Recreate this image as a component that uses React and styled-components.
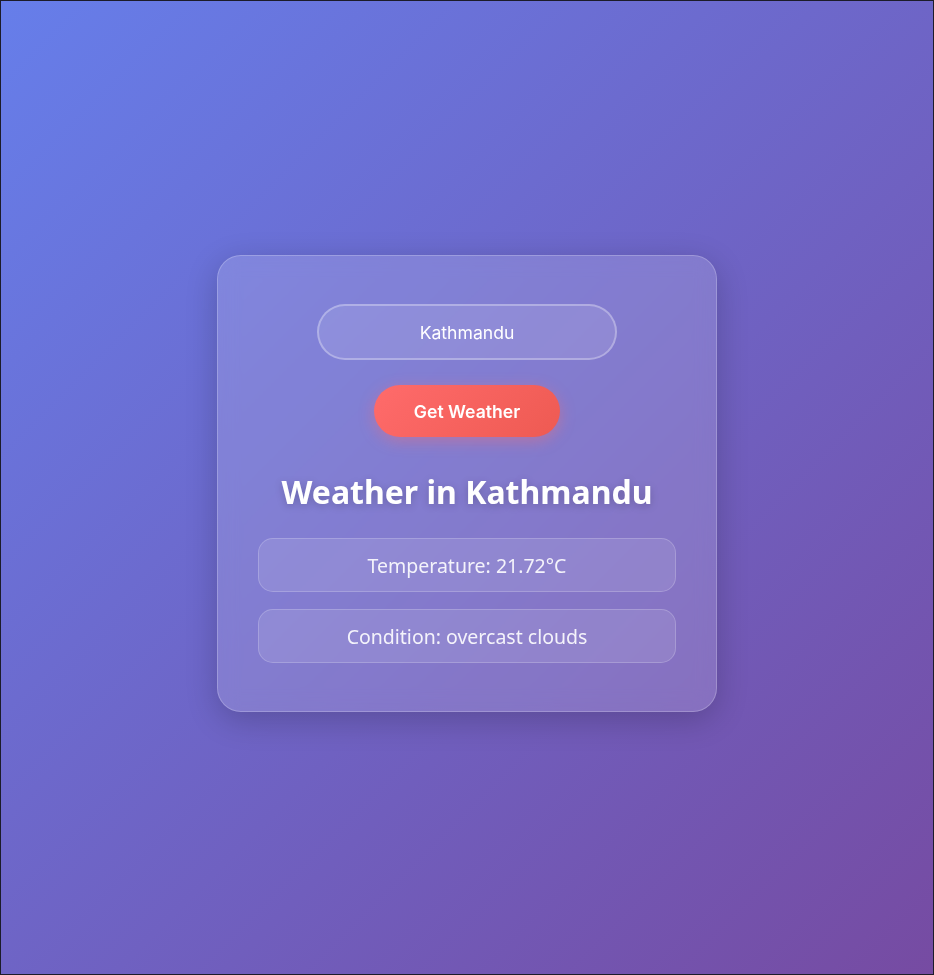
import React, { useState } from 'react';
import styled, { createGlobalStyle } from 'styled-components';

const GlobalStyle = createGlobalStyle`
  * {
    box-sizing: border-box;
  }
  html, body {
    margin: 0;
    padding: 0;
  }
  body {
    font-family: 'Noto Sans', 'Open Sans', sans-serif;
  }
`;

const Page = styled.div`
  min-height: 100vh;
  display: flex;
  justify-content: center;
  align-items: center;
  padding-bottom: 9px;
  border: 1px solid #1c1c2a;
  background: linear-gradient(135deg, #667eea 0%, #764ba2 100%);
`;

const Card = styled.div`
  width: 500px;
  padding: 48px 40px 48px;
  display: flex;
  flex-direction: column;
  align-items: center;
  background: rgba(255, 255, 255, 0.15);
  border: 1px solid rgba(255, 255, 255, 0.22);
  border-radius: 24px;
  box-shadow: 0 8px 32px rgba(0, 0, 0, 0.2);
  backdrop-filter: blur(10px);
`;

const CityInput = styled.input`
  width: 300px;
  height: 56px;
  padding: 2px 20px 0;
  border: 2px solid rgba(255, 255, 255, 0.3);
  border-radius: 30px;
  background: rgba(255, 255, 255, 0.1);
  color: #fff;
  font-family: Inter, sans-serif;
  font-size: 17.6px;
  text-align: center;
  outline: none;
`;

const FetchButton = styled.button`
  margin-top: 25px;
  width: 186px;
  height: 52px;
  padding: 2px 0 0;
  border: none;
  border-radius: 26px;
  background: linear-gradient(135deg, #ff6b6b, #ee5a52);
  color: #fff;
  font-family: Inter, sans-serif;
  font-size: 17.6px;
  font-weight: 600;
  box-shadow: 0 4px 15px rgba(255, 107, 107, 0.4);
  cursor: pointer;
`;

const Title = styled.h2`
  margin: 33px 0 24px;
  color: #fff;
  font-family: 'Noto Sans', 'Open Sans', sans-serif;
  font-size: 32px;
  font-weight: 700;
  line-height: 44px;
  text-shadow: 0 2px 8px rgba(0, 0, 0, 0.2);
`;

const InfoList = styled.div`
  width: 100%;
  display: flex;
  flex-direction: column;
  gap: 17px;
`;

const InfoRow = styled.p`
  margin: 0;
  height: 54px;
  padding-top: 2px;
  display: flex;
  justify-content: center;
  align-items: center;
  background: rgba(255, 255, 255, 0.1);
  border: 1px solid rgba(255, 255, 255, 0.2);
  border-radius: 15px;
  color: rgba(255, 255, 255, 0.9);
  font-family: 'Noto Sans', 'Open Sans', sans-serif;
  font-size: 19.5px;
`;

const weather = {
  city: 'Kathmandu',
  temp: 21.72,
  description: 'overcast clouds',
};

export default function App() {
  const [city, setCity] = useState('Kathmandu');

  return (
    <>
      <GlobalStyle />
      <Page>
        <Card>
          <CityInput value={city} onChange={(e) => setCity(e.target.value)} />
          <FetchButton>Get Weather</FetchButton>
          <Title>Weather in {weather.city}</Title>
          <InfoList>
            <InfoRow>Temperature: {weather.temp}°C</InfoRow>
            <InfoRow>Condition: {weather.description}</InfoRow>
          </InfoList>
        </Card>
      </Page>
    </>
  );
}
